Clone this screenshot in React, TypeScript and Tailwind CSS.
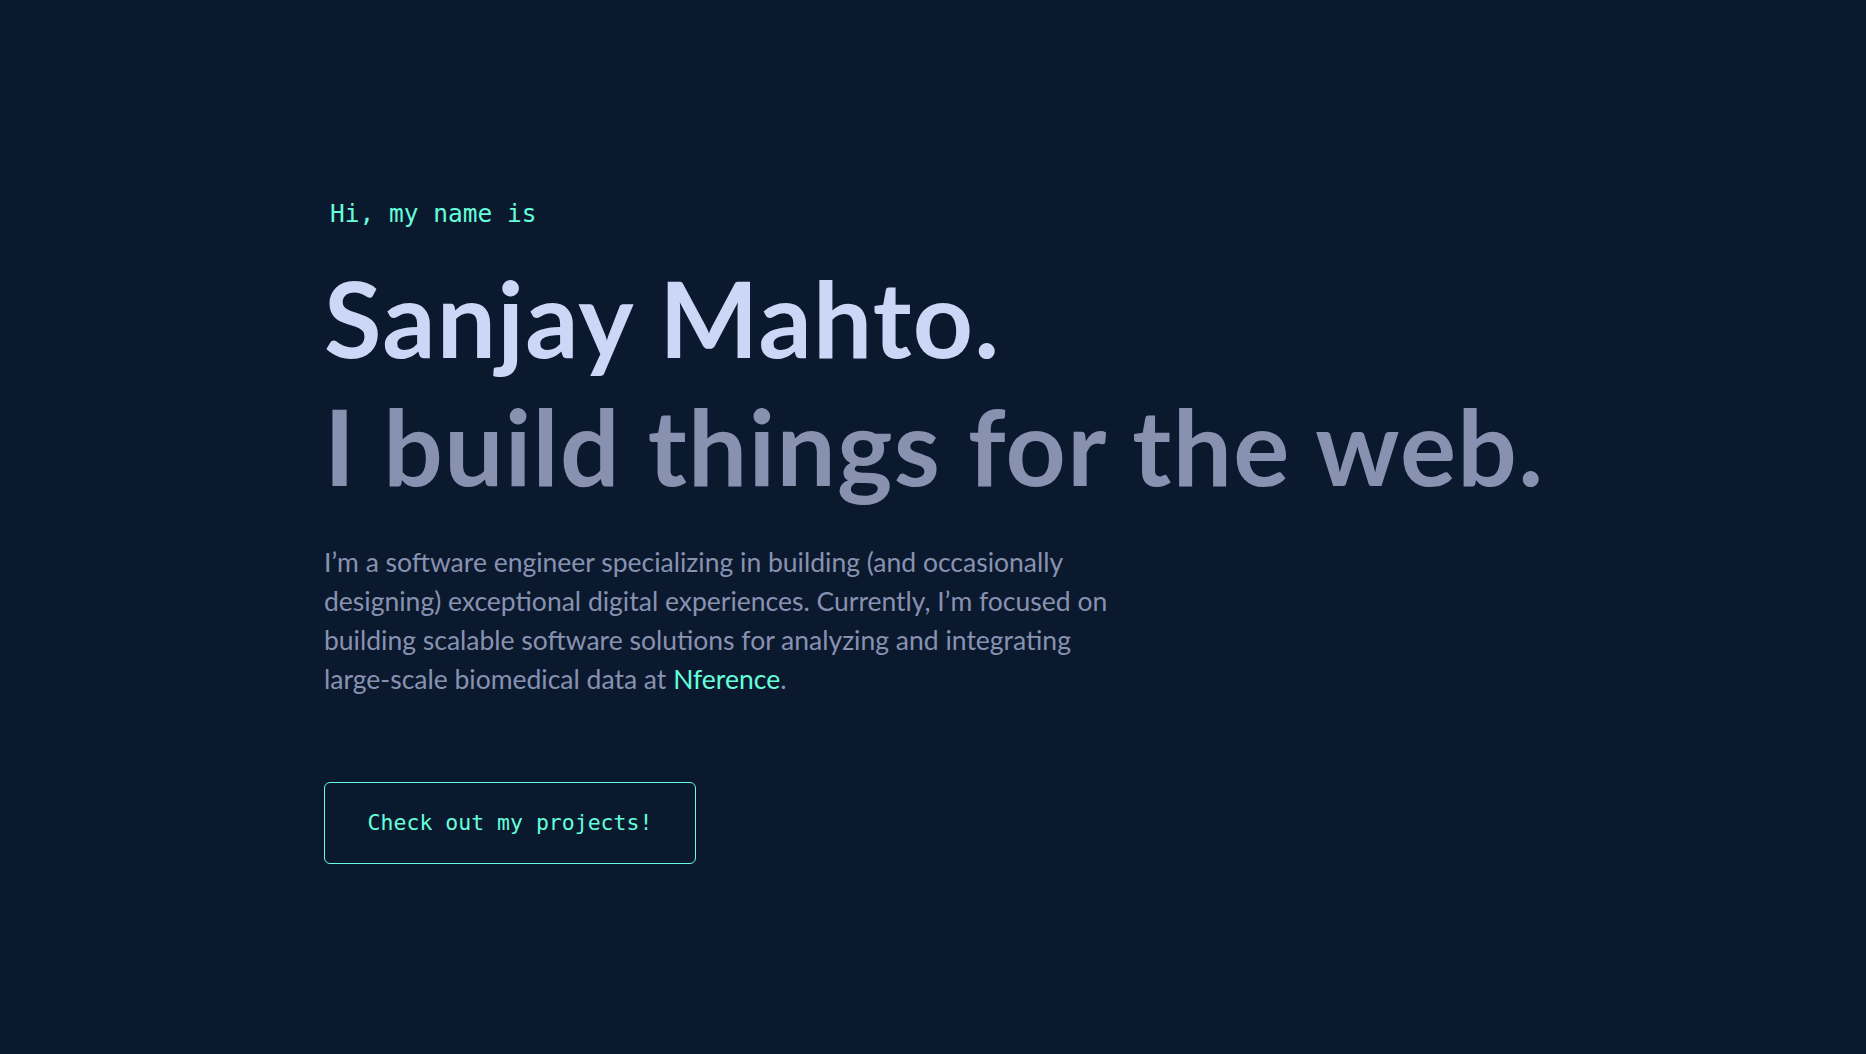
export default function App() {
  return (
    <div className="min-h-screen w-full bg-[#0b192f]">
      <section className="flex flex-col items-start pl-[324px] pt-[199px]">
        <p className="font-['DejaVu_Sans_Mono',monospace] text-[24.5px] leading-[30px] text-[#64ffda] pl-[6px]">
          Hi, my name is
        </p>

        <h1 className="mt-[32px] font-['Lato',sans-serif] text-[105px] font-bold leading-[113px] tracking-[1.3px] text-[#ccd6f6]">
          Sanjay Mahto.
        </h1>

        <h2 className="mt-[15px] font-['Lato',sans-serif] text-[105px] font-bold leading-[113px] tracking-[1.3px] text-[#8892b0]">
          I build things for the web.
        </h2>

        <p className="mt-[41px] max-w-[810px] font-['Lato',sans-serif] text-[26.5px] leading-[39px] text-[#8892b0]">
          I’m a software engineer specializing in building (and occasionally
          designing) exceptional digital experiences. Currently, I’m focused on
          building scalable software solutions for analyzing and integrating
          large-scale biomedical data at{" "}
          <a href="#" className="text-[#64ffda]">
            Nference
          </a>
          .
        </p>

        <a
          href="#projects"
          className="mt-[83px] flex h-[82px] w-[372px] items-center justify-center rounded-[6px] border border-[#64ffda] font-['DejaVu_Sans_Mono',monospace] text-[21.5px] text-[#64ffda]"
        >
          Check out my projects!
        </a>
      </section>
    </div>
  );
}
